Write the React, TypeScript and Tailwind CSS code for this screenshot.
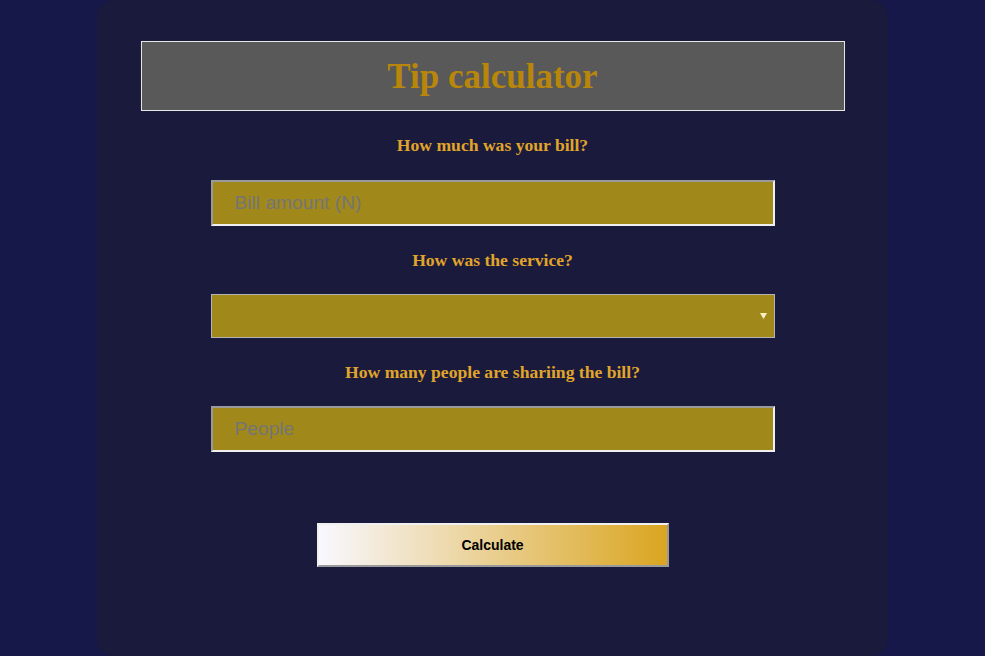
import React from "react";

export default function App() {
  const serif = { fontFamily: '"Liberation Serif", "Times New Roman", serif' };
  return (
    <div className="min-h-[656px] w-full bg-[#161849]">
      <div
        className="mx-auto w-[791px] h-[656px] rounded-[16px] bg-[#1a1a3c] pt-[41px] flex flex-col items-center"
        style={serif}
      >
        <div className="w-[704px] h-[70px] border border-[#e6e6e6] bg-[#595959] flex items-center justify-center">
          <h1 className="text-[35px] font-bold text-[#b8860b] leading-none">Tip calculator</h1>
        </div>

        <label className="mt-[24px] h-[20px] leading-[20px] text-[17.6px] font-bold text-[#e0a52a]">
          How much was your bill?
        </label>
        <input
          type="text"
          placeholder="Bill amount (N)"
          className="mt-[25px] w-[564px] h-[46px] bg-[#a0891a] border-2 border-t-[#9a9a9a] border-l-[#9a9a9a] border-b-[#f0f0f0] border-r-[#f0f0f0] pl-[22px] text-[19.2px] text-[#333] placeholder:text-[#757575] outline-none"
          style={{ fontFamily: '"Liberation Sans", Arial, sans-serif' }}
        />

        <label className="mt-[24px] h-[20px] leading-[20px] text-[17.6px] font-bold text-[#e0a52a]">
          How was the service?
        </label>
        <div className="mt-[24px] w-[564px] h-[44px] bg-[#a0891a] border border-[#b4b4b4] flex items-center justify-end pr-[7px]">
          <svg width="7" height="6" viewBox="0 0 7 6">
            <polygon points="0,0 7,0 3.5,6" fill="#f5f0c8" />
          </svg>
        </div>

        <label className="mt-[24px] h-[20px] leading-[20px] text-[17.6px] font-bold text-[#e0a52a]">
          How many people are shariing the bill?
        </label>
        <input
          type="text"
          placeholder="People"
          className="mt-[24px] w-[564px] h-[46px] bg-[#a0891a] border-2 border-t-[#9a9a9a] border-l-[#9a9a9a] border-b-[#f0f0f0] border-r-[#f0f0f0] pl-[22px] text-[19.2px] text-[#333] placeholder:text-[#757575] outline-none"
          style={{ fontFamily: '"Liberation Sans", Arial, sans-serif' }}
        />

        <button
          className="mt-[71px] w-[352px] h-[44px] border-2 border-t-[#f0f0f0] border-l-[#f0f0f0] border-b-[#9a9a9a] border-r-[#9a9a9a] bg-[linear-gradient(to_right,#f8f8ff,#daa520)] text-[14px] font-bold text-black"
          style={{ fontFamily: '"Liberation Sans", Arial, sans-serif' }}
        >
          Calculate
        </button>
      </div>
    </div>
  );
}
